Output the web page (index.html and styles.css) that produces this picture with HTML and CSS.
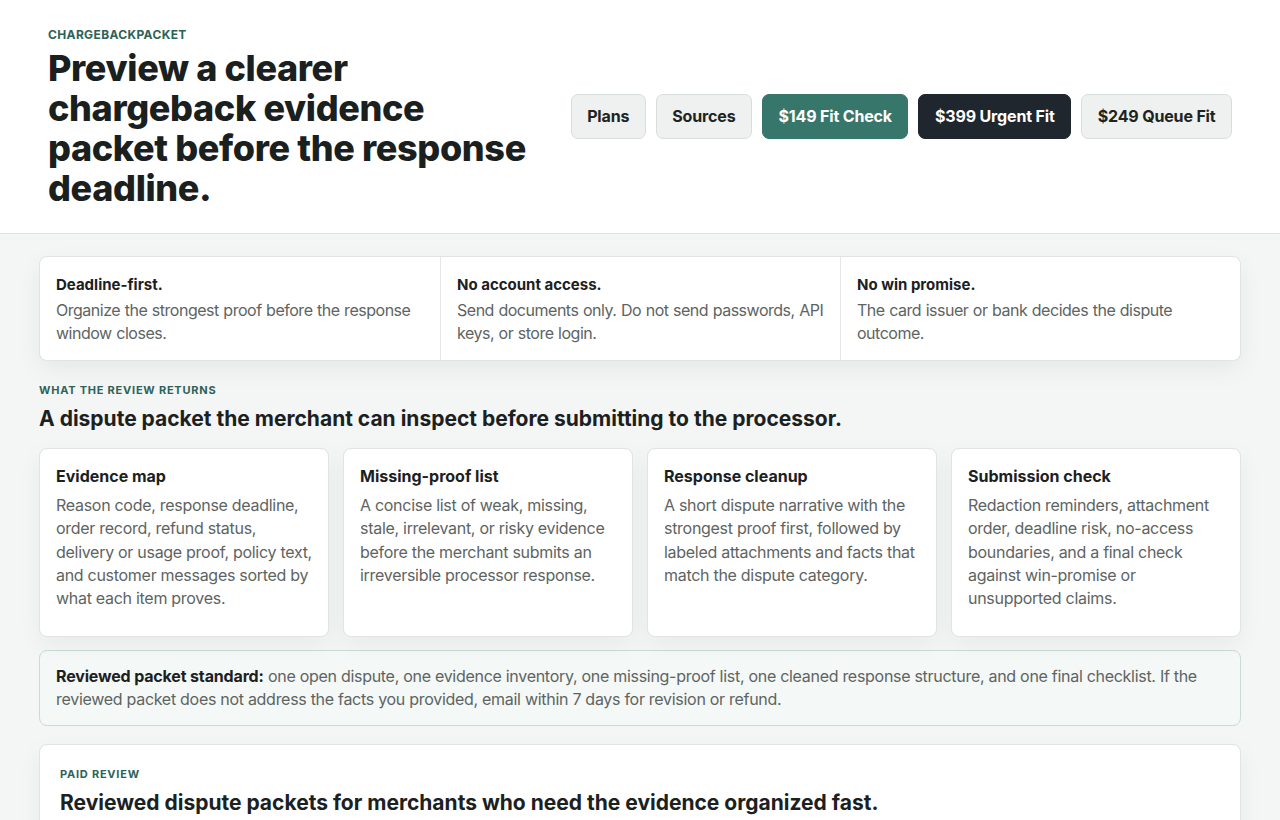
FILE: index.html
```html
<!DOCTYPE html>
<html lang="en">
<head>
<meta charset="utf-8">
<title>ChargebackPacket</title>
<link rel="stylesheet" href="styles.css">
</head>
<body>
<header class="top">
  <div class="brand">
    <div class="eyebrow">ChargebackPacket</div>
    <h1>Preview a clearer chargeback evidence packet before the response deadline.</h1>
  </div>
  <nav class="actions">
    <a class="btn light" href="#">Plans</a>
    <a class="btn light" href="#">Sources</a>
    <a class="btn teal" href="#">$149 Fit Check</a>
    <a class="btn dark" href="#">$399 Urgent Fit</a>
    <a class="btn light" href="#">$249 Queue Fit</a>
  </nav>
</header>
<main class="main">
  <section class="strip">
    <div class="strip-item"><strong>Deadline-first.</strong><p>Organize the strongest proof before the response window closes.</p></div>
    <div class="strip-item"><strong>No account access.</strong><p>Send documents only. Do not send passwords, API keys, or store login.</p></div>
    <div class="strip-item"><strong>No win promise.</strong><p>The card issuer or bank decides the dispute outcome.</p></div>
  </section>

  <section class="returns">
    <div class="eyebrow small">What the review returns</div>
    <h2>A dispute packet the merchant can inspect before submitting to the processor.</h2>
    <div class="cards">
      <div class="card"><h3>Evidence map</h3><p>Reason code, response deadline, order record, refund status, delivery or usage proof, policy text, and customer messages sorted by what each item proves.</p></div>
      <div class="card"><h3>Missing-proof list</h3><p>A concise list of weak, missing, stale, irrelevant, or risky evidence before the merchant submits an irreversible processor response.</p></div>
      <div class="card"><h3>Response cleanup</h3><p>A short dispute narrative with the strongest proof first, followed by labeled attachments and facts that match the dispute category.</p></div>
      <div class="card"><h3>Submission check</h3><p>Redaction reminders, attachment order, deadline risk, no-access boundaries, and a final check against win-promise or unsupported claims.</p></div>
    </div>
    <p class="standard"><strong>Reviewed packet standard:</strong> one open dispute, one evidence inventory, one missing-proof list, one cleaned response structure, and one final checklist. If the reviewed packet does not address the facts you provided, email within 7 days for revision or refund.</p>
  </section>

  <section class="paid">
    <div class="eyebrow small">Paid review</div>
    <h2>Reviewed dispute packets for merchants who need the evidence organized fast.</h2>
  </section>
</main>
</body>
</html>
```

FILE: styles.css
```css
* { box-sizing: border-box; }
html, body { margin: 0; padding: 0; }
body {
  font-family: Inter, "Noto Sans", "Liberation Sans", sans-serif;
  background: #f4f5f5;
  color: #1b211f;
}
.top {
  background: #ffffff;
  border-bottom: 1px solid #dfe2e1;
  display: flex;
  align-items: center;
  justify-content: space-between;
  padding: 27px 48px 24px 48px;
  height: 234px;
}
.brand { width: 490px; }
.eyebrow {
  color: #2d6258;
  font-size: 12px;
  font-weight: 700;
  letter-spacing: 0.03em;
  text-transform: uppercase;
  line-height: 14px;
}
h1 {
  margin: 6px 0 0 0;
  font-size: 36px;
  line-height: 40px;
  font-weight: 800;
  letter-spacing: -0.01em;
  color: #1a201e;
}
.actions {
  display: flex;
  gap: 10px;
  align-items: center;
  margin-top: -4px;
}
.btn {
  display: inline-flex;
  align-items: center;
  height: 45px;
  padding: 0 15.5px;
  border-radius: 7px;
  font-size: 16px;
  font-weight: 700;
  text-decoration: none;
  letter-spacing: -0.01em;
}
.btn.light { background: #eef1f0; border: 1px solid #d8dedc; color: #1d2421; }
.btn.teal { background: #37776b; color: #ffffff; border: 1px solid #37776b; }
.btn.dark { background: #20262d; color: #ffffff; border: 1px solid #20262d; }

.main {
  width: 1202px;
  margin: 0 auto;
  padding-top: 22px;
}
.strip {
  display: grid;
  grid-template-columns: repeat(3, 1fr);
  background: #ffffff;
  border: 1px solid #e1e4e3;
  border-radius: 8px;
  box-shadow: 0 8px 24px rgba(20, 30, 28, 0.06);
}
.strip-item {
  padding: 18px 16px 15px 16px;
  border-left: 1px solid #e4e7e6;
}
.strip-item:first-child { border-left: none; }
.strip-item strong {
  display: block;
  font-size: 15px;
  line-height: 20px;
  font-weight: 700;
  color: #1b211f;
}
.strip-item p {
  margin: 4px 0 0 0;
  font-size: 16px;
  line-height: 23px;
  letter-spacing: -0.03em;
  word-spacing: 0.5px;
  color: #5d6462;
}
.returns { padding-top: 22px; }
.eyebrow.small { font-size: 11px; line-height: 14px; letter-spacing: 0.07em; }
h2 {
  margin: 8px 0 0 0;
  font-size: 21px;
  line-height: 28px;
  font-weight: 700;
  letter-spacing: 0;
  color: #1b211f;
}
.cards {
  display: grid;
  grid-template-columns: repeat(4, 1fr);
  gap: 14px;
  margin-top: 15px;
}
.card {
  background: #ffffff;
  border: 1px solid #e1e4e3;
  border-radius: 8px;
  padding: 17px 16px 16px 16px;
  height: 189px;
  box-shadow: 0 8px 24px rgba(20, 30, 28, 0.05);
}
.card h3 {
  margin: 0;
  font-size: 16px;
  line-height: 20px;
  font-weight: 700;
  color: #1b211f;
}
.card p {
  margin: 8px 0 0 0;
  font-size: 16px;
  line-height: 23.3px;
  letter-spacing: -0.018em;
  color: #5d6462;
}
.standard {
  margin: 13px 0 0 0;
  background: #f4f8f7;
  border: 1px solid #cadbd6;
  border-radius: 8px;
  padding: 14px 16px 14px 16px;
  font-size: 16px;
  line-height: 23px;
  letter-spacing: -0.018em;
  color: #5d6462;
}
.standard strong { color: #1b211f; font-weight: 700; letter-spacing: -0.01em; }
.paid {
  margin-top: 18px;
  background: #ffffff;
  border: 1px solid #e1e4e3;
  border-radius: 8px;
  padding: 22px 20px 40px 20px;
  box-shadow: 0 8px 24px rgba(20, 30, 28, 0.05);
}
```
